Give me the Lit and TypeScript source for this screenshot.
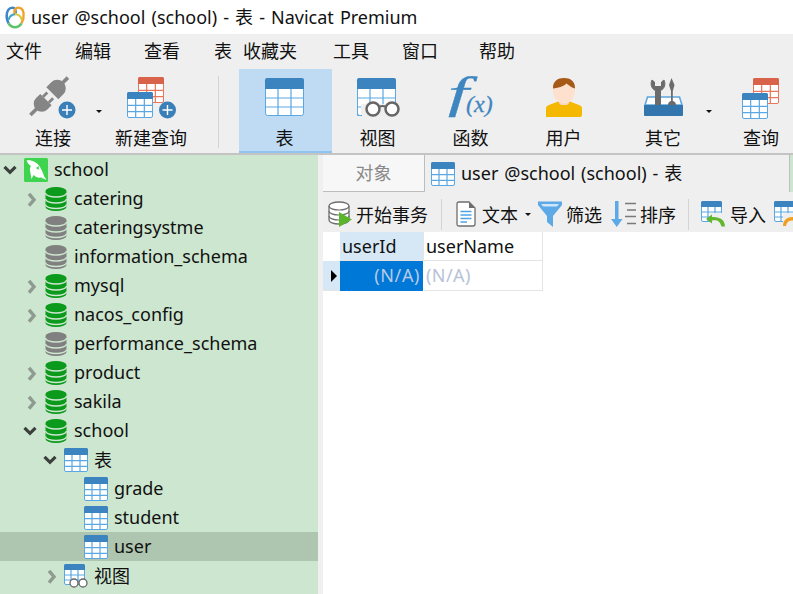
import { LitElement, html, css, svg } from "lit";
import { customElement } from "lit/decorators.js";

const BLUE = "#3b84c0";
const LINE = "#5aa7e2";
const RED = "#d9634a";
const REDLINE = "#e8775c";

function tableBody(x: number, y: number, w: number, h: number, head: string, line: string, headH: number) {
  const r = Math.max(1.5, w / 18);
  const c1 = x + w / 3, c2 = x + (2 * w) / 3;
  const bodyH = h - headH;
  const r1 = y + headH + bodyH / 3, r2 = y + headH + (2 * bodyH) / 3;
  return svg`
    <rect x=${x + 0.5} y=${y + 0.5} width=${w - 1} height=${h - 1} rx=${r} fill="#fff" stroke=${line}/>
    <path d="M${c1} ${y} V${y + h} M${c2} ${y} V${y + h} M${x} ${r1} H${x + w} M${x} ${r2} H${x + w}" stroke=${line} stroke-width="1.2" fill="none"/>
    <path d="M${x} ${y + headH} V${y + r} Q${x} ${y} ${x + r} ${y} H${x + w - r} Q${x + w} ${y} ${x + w} ${y + r} V${y + headH} Z" fill=${head}/>
  `;
}

const smallTable = html`<svg class="i24" viewBox="0 0 24 24">${tableBody(0, 0, 24, 24, BLUE, LINE, 7)}</svg>`;
const smallView = html`<svg class="i24" viewBox="0 0 24 24">
  ${tableBody(0, 0, 21, 21, BLUE, LINE, 6)}
  <circle cx="10" cy="19" r="4" fill="#fff" stroke="#666" stroke-width="1.3"/>
  <circle cx="19" cy="19" r="4" fill="#fff" stroke="#666" stroke-width="1.3"/>
</svg>`;

function chevron(open: boolean) {
  if (open) {
    return html`<svg class="chev" viewBox="0 0 20 20"><path d="M0.5 6.8 L6 12.3 L11.5 6.8" fill="none" stroke="#3c3f3c" stroke-width="3.2"/></svg>`;
  }
  return html`<svg class="chev" viewBox="0 0 20 20"><path d="M5 4.8 L10 10.75 L5 16.7" fill="none" stroke="#8f9a90" stroke-width="3.4"/></svg>`;
}

function db(color: string) {
  return html`<svg class="i24" viewBox="-1.5 0 24 24">
    <path d="M0 4 A10.5 4 0 0 1 21 4 V20 A10.5 4 0 0 1 0 20 Z" fill=${color}/>
    <path d="M0 6 A10.5 4 0 0 0 21 6 M0 12 A10.5 4 0 0 0 21 12 M0 17.5 A10.5 4 0 0 0 21 17.5" fill="none" stroke="#cde6cf" stroke-width="1.4"/>
  </svg>`;
}

const dolphin = html`<svg class="i24" viewBox="0 0 24 24">
  <rect width="24" height="24" rx="1.5" fill="#3fd44f"/>
  <path d="M2.5 2.5 C7 1.5 13 4 16 9 C18 12.5 19 15 20 18 L22.5 22 L17 19.5 C14 20 11.5 19 9.5 17 L7.5 21 L6.3 14 C5.5 11.5 6 9.5 7 8 C5 7 3.5 5 2.5 2.5 Z" fill="#fff"/>
  <path d="M12 10 L15 8 L14.5 12 Z" fill="#3fd44f"/>
</svg>`;

const plus = (cx: number, cy: number) => svg`
  <circle cx=${cx} cy=${cy} r="8.5" fill="#3b7fb8"/>
  <path d="M${cx - 5} ${cy} H${cx + 5} M${cx} ${cy - 5} V${cy + 5}" stroke="#fff" stroke-width="1.4"/>
`;

const icons = {
  connect: html`<svg class="big" viewBox="0 0 50 44">
    <g transform="translate(21.5,20) rotate(-45)" fill="#858585">
      <rect x="-27" y="-1.8" width="9" height="3.6"/>
      <path d="M-5 -8 H-11 A8 8 0 0 0 -11 8 H-5 Z"/>
      <rect x="-5" y="-5.5" width="6" height="2.8"/>
      <rect x="-5" y="2.7" width="6" height="2.8"/>
      <path d="M4 -8.5 H11 A8.5 8.5 0 0 1 11 8.5 H4 Z"/>
      <rect x="18" y="-1.8" width="8" height="3.6"/>
    </g>
    ${plus(39, 34)}
  </svg>`,
  newQuery: html`<svg class="big" viewBox="0 0 50 44">
    ${tableBody(13, 1, 26, 26, RED, REDLINE, 7)}
    ${tableBody(2, 16, 26, 26, BLUE, LINE, 7)}
    ${plus(42.5, 34)}
  </svg>`,
  table: html`<svg class="big" viewBox="0 0 50 44">
    ${tableBody(5, 2, 39, 38, BLUE, LINE, 11)}
  </svg>`,
  view: html`<svg class="big" viewBox="0 0 50 44">
    ${tableBody(4, 2, 39, 38, BLUE, LINE, 11)}
    <rect x="8" y="28" width="37" height="14" fill="#efefef"/>
    <path d="M4.5 32 V39.5 H9" fill="none" stroke=${LINE}/>
    <circle cx="20" cy="33" r="6.5" fill="#fff" stroke="#666" stroke-width="2.5"/>
    <circle cx="39" cy="33" r="6.5" fill="#fff" stroke="#666" stroke-width="2.5"/>
    <path d="M26 31 Q29.5 29 33 31" fill="none" stroke="#666" stroke-width="2"/>
  </svg>`,
  func: html`<svg class="big fx" viewBox="0 0 50 44">
    <text class="fx1" transform="translate(2,32) scale(1.7,1)">f</text>
    <text class="fx2" x="20" y="36">(x)</text>
  </svg>`,
  user: html`<svg class="big" viewBox="0 0 50 44">
    <path d="M7 41 V32 Q7 30 10 29 L19 25.5 H31 L40 29 Q43 30 43 32 V39 Q43 41 41 41 Z" fill="#f5b800"/>
    <rect x="20" y="22" width="10" height="7" rx="3" fill="#f7d8c4"/>
    <ellipse cx="25" cy="14.5" rx="11" ry="13" fill="#fde0cd"/>
    <path d="M14 12.5 C13.5 5 19 2 25 2 C31 2 36.5 5 36 12.5 C33 12 30 9.5 27.5 7.5 C25 10.5 18 12 14 12.5 Z" fill="#a55a18"/>
  </svg>`,
  other: html`<svg class="big" viewBox="0 0 50 44">
    <path d="M9.5 21 H41.5 L44 29 H7 Z" fill="#fff" stroke=${LINE} stroke-width="1.6"/>
    <path d="M14 4 C12 8 13.5 13 17.5 14.5 V30 H22.5 V14.5 C26.5 13 28 8 26 4 L23.5 6 V10.5 H16.5 V6 Z" fill="#6b6b6b" stroke="#6b6b6b" stroke-width="1"/>
    <path d="M33.5 2 L36.5 9 L34.8 15 V25 C37 25.5 38 27 38 29 H30 C30 27 31 25.5 33 25 V15 L31 9 Z" fill="#6b6b6b"/>
    <path d="M6 29 H45 V39 Q45 40 44 40 H7 Q6 40 6 39 Z" fill="#3376ae"/>
  </svg>`,
  query: html`<svg class="big" viewBox="0 0 50 44">
    ${tableBody(17, 2, 26, 26, RED, REDLINE, 7)}
    ${tableBody(6, 17, 26, 26, BLUE, LINE, 7)}
  </svg>`,
};

const tbIcons = {
  tx: html`<svg class="t24" viewBox="0 0 24 26">
    <path d="M1 5 A10 4 0 0 1 21 5 V19 A10 4 0 0 1 1 19 Z" fill="#fff" stroke="#6e6e6e" stroke-width="1.3"/>
    <path d="M1 5 A10 4 0 0 0 21 5 M1 10 A10 4 0 0 0 21 10 M1 15 A10 4 0 0 0 21 15" fill="none" stroke="#6e6e6e" stroke-width="1.2"/>
    <path d="M11 11 L24 18.5 L11 26 Z" fill="#5ab52a"/>
  </svg>`,
  doc: html`<svg class="t20" viewBox="0 0 20 26">
    <path d="M1 3 Q1 1 3 1 H13 L19 7 V23 Q19 25 17 25 H3 Q1 25 1 23 Z" fill="#fff" stroke="#6e6e6e" stroke-width="1.3"/>
    <path d="M13 1 V7 H19 Z" fill="#6e6e6e"/>
    <path d="M4.5 10.5 H15.5 M4.5 14 H15.5 M4.5 17.5 H15.5 M4.5 21 H11" stroke="#4ea3e6" stroke-width="1.3"/>
  </svg>`,
  funnel: html`<svg class="t24" viewBox="0 0 24 26">
    <path d="M0 0.5 H24 V4 L15 15 V26 L9 21 V15 L0 4 Z" fill="#5da8e6"/>
    <path d="M3 3 H21 L19 5.5 H5 Z" fill="#cfe5f8"/>
  </svg>`,
  sort: html`<svg class="t25" viewBox="0 0 25 26">
    <path d="M4 0 H7.5 V18 H11.5 L5.75 26 L0 18 H4 Z" fill="#5da8e6"/>
    <path d="M14 2.5 H25 M16 9 H25 M14 15.5 H25 M16 22.5 H25" stroke="#7a7a7a" stroke-width="1.4"/>
  </svg>`,
  imp: html`<svg class="t25" viewBox="0 0 25 26">
    ${tableBody(0, 0, 21, 21, BLUE, LINE, 6)}
    <rect x="9" y="12" width="16" height="14" fill="#efefef"/>
    <path d="M11 13.5 L5 18 L11 22.5 V19.5 C16 18.5 19 20 20.5 25.5 H24 C24 19 19 15.5 11 16 Z" fill="#62b72e"/>
  </svg>`,
  imp2: html`<svg class="t25" viewBox="0 0 25 26">
    ${tableBody(0, 0, 21, 21, BLUE, LINE, 6)}
    <rect x="9" y="12" width="16" height="14" fill="#efefef"/>
    <path d="M20 13 L25 18 L20 22.5 V19.5 C16 19.5 13 20 12 25 H9 C9 19 13 15.5 20 16 Z" fill="#f0a020"/>
  </svg>`,
};

const logo = html`<svg class="logo" viewBox="0 0 24 24">
  <path d="M5 19 C1 12 3 3 8 2 C12 1 14 5 12 9" fill="none" stroke="#3f86c8" stroke-width="2.6"/>
  <path d="M12 9 C10 5 13 1 17 2 C22 3 23 12 19 19" fill="none" stroke="#f0a32a" stroke-width="2.6"/>
  <path d="M5 19 A8 8 0 0 0 19 19" fill="none" stroke="#5ec26a" stroke-width="2.8"/>
  <path d="M5 15 A8 8 0 0 1 12 9" fill="none" stroke="#43a8c8" stroke-width="2.4"/>
  <path d="M12 9 A8 8 0 0 1 19.5 15" fill="none" stroke="#d9c83a" stroke-width="2.4"/>
</svg>`;

const MENU: [string, number][] = [
  ["文件", 6], ["编辑", 33], ["查看", 33], ["表", 34], ["收藏夹", 11], ["工具", 36], ["窗口", 33], ["帮助", 41],
];

type Row = { label: string; level: number; chev?: "open" | "closed"; icon: unknown; sel?: boolean };
const GREEN = "#0b9a1b";
const GREY = "#808080";
const TREE: Row[] = [
  { label: "school", level: 0, chev: "open", icon: dolphin },
  { label: "catering", level: 1, chev: "closed", icon: db(GREEN) },
  { label: "cateringsystme", level: 1, icon: db(GREY) },
  { label: "information_schema", level: 1, icon: db(GREY) },
  { label: "mysql", level: 1, chev: "closed", icon: db(GREEN) },
  { label: "nacos_config", level: 1, chev: "closed", icon: db(GREEN) },
  { label: "performance_schema", level: 1, icon: db(GREY) },
  { label: "product", level: 1, chev: "closed", icon: db(GREEN) },
  { label: "sakila", level: 1, chev: "closed", icon: db(GREEN) },
  { label: "school", level: 1, chev: "open", icon: db(GREEN) },
  { label: "表", level: 2, chev: "open", icon: smallTable },
  { label: "grade", level: 3, icon: smallTable },
  { label: "student", level: 3, icon: smallTable },
  { label: "user", level: 3, icon: smallTable, sel: true },
  { label: "视图", level: 2, chev: "closed", icon: smallView },
];

@customElement("app-root")
export class AppRoot extends LitElement {
  static styles = css`
    :host {
      display: block;
      width: 793px;
      height: 594px;
      overflow: hidden;
      background: #fff;
      color: #111;
      font-family: "Noto Sans", "Noto Sans CJK SC", sans-serif;
      font-size: 18px;
    }
    svg { display: block; flex: none; overflow: visible; }
    .title { height: 34px; display: flex; align-items: center; gap: 5px; padding-left: 4px; background: #fff; white-space: nowrap; }
    .title span { margin-top: -2px; word-spacing: 1.4px; }
    .logo { width: 22px; height: 24px; }
    .menu { height: 35px; box-sizing: border-box; padding-bottom: 4px; display: flex; align-items: center; background: #efefef; }
    .menu span { flex: none; }
    .toolbar { height: 84px; display: flex; background: #efefef; padding-left: 10px; border-bottom: 2px solid #c4c4c4; overflow: hidden; box-sizing: content-box; }
    .big-btn { flex: none; display: flex; flex-direction: column; align-items: center; padding-top: 7px; box-sizing: border-box; height: 84px; }
    .big { width: 50px; height: 44px; }
    .big-btn span { line-height: 24px; margin-top: 6px; }
    .w86 { width: 86px; }
    .w96 { width: 96px; }
    .w96 span { margin-left: 2px; }
    .w98 { width: 98px; }
    .w93 { width: 93px; padding-right: 2px; }
    .w90 { width: 90px; margin-left: 7px; }
    .active { background: #bfdbf3; border-bottom: 2px solid #8fc4f0; }
    .drop { flex: none; width: 6px; height: 84px; display: flex; align-items: center; justify-content: center; }
    .back { margin-left: -2px; }
    .tri { width: 0; height: 0; border-left: 3px solid transparent; border-right: 3px solid transparent; border-top: 3px solid #111; flex: none; }
    .sep { flex: none; width: 1px; height: 72px; margin: 1px 20px 0; align-self: center; background: #d4d4d4; }
    .main { height: 439px; display: flex; }
    .tree { flex: none; width: 318px; background: #cde6cf; overflow: hidden; }
    .row { display: flex; align-items: center; height: 29px; white-space: nowrap; }
    .row.sel { background: #aec5af; }
    .chev { width: 20px; height: 20px; flex: none; }
    .nochev { width: 20px; flex: none; }
    .i24 { width: 24px; height: 24px; }
    .row .name { margin-left: 6px; margin-top: -2px; }
    .gutter { flex: none; width: 5px; background: #f0f0f0; }
    .right { flex: 1; min-width: 0; display: flex; flex-direction: column; background: #fff; }
    .tabs { height: 37px; display: flex; background: #efefef; }
    .tab-off { flex: none; width: 102px; box-sizing: border-box; padding-bottom: 2px; display: flex; align-items: center; justify-content: center; color: #8a8a8a; background: #f7f7f7; border-right: 1px solid #bdbdbd; border-bottom: 1px solid #bdbdbd; }
    .tab-on { flex: none; width: 365px; box-sizing: border-box; display: flex; align-items: center; gap: 6px; padding-left: 6px; border-right: 1px solid #bdbdbd; white-space: nowrap; }
    .tab-on span { margin-top: -4px; word-spacing: 1.2px; }
    .tab-end { flex: 1; background: #cde6cf; }
    .tools { height: 40px; box-sizing: border-box; padding-top: 4px; display: flex; align-items: center; background: #efefef; padding-left: 5px; overflow: hidden; white-space: nowrap; }
    .tool { flex: none; display: flex; align-items: center; gap: 4px; }
    .t24 { width: 24px; height: 26px; }
    .t20 { width: 20px; height: 26px; }
    .t25 { width: 25px; height: 26px; }
    .tsep { flex: none; width: 1px; height: 31px; background: #d4d4d4; }
    .m13 { margin-left: 13px; }
    .m14 { margin-left: 14px; }
    .m7 { margin-left: 7px; }
    .m9 { margin-left: 9px; }
    .m12 { margin-left: 12px; }
    .m8 { margin-left: 8px; }
    .gap6 { gap: 6px; }
    .grid { display: grid; grid-template-columns: 17px 84px 119px; grid-template-rows: 29px 30px; width: 220px; }
    .cell { box-sizing: border-box; display: flex; align-items: center; padding: 0 2px; border-right: 1px solid #e4e4e4; border-bottom: 1px solid #e4e4e4; white-space: nowrap; }
    .corner { border: none; }
    .hl { background: #d6e8f6; }
    .ind { background: #d6e8f6; justify-content: flex-end; padding: 0 3px 0 0; border: none; border-bottom: 1px solid #e4e4e4; }
    .arrow { width: 0; height: 0; border-top: 6px solid transparent; border-bottom: 6px solid transparent; border-left: 6px solid #000; }
    .cur { background: #0078d7; color: #b9c9e6; justify-content: flex-end; padding: 0 3px 2px 0; letter-spacing: 0.6px; border: none; border-right: 1px solid #fff; }
    .na { color: #b8c2d8; padding: 0 2px 2px; letter-spacing: 0.4px; }
    .fx1 { font: italic 44px "Liberation Serif", serif; fill: #3f86c0; stroke: #3f86c0; stroke-width: 0.3px; }
    .fx2 { font: italic 24px "Liberation Serif", serif; fill: #3f86c0; stroke: #3f86c0; stroke-width: 0.3px; }
  `;

  private btn(icon: unknown, label: string, cls: string) {
    return html`<div class="big-btn ${cls}">${icon}<span>${label}</span></div>`;
  }

  render() {
    return html`
      <div class="title">${logo}<span>user @school (school) - 表 - Navicat Premium</span></div>
      <div class="menu">
        ${MENU.map(([t, m]) => html`<span style="margin-left:${m}px">${t}</span>`)}
      </div>
      <div class="toolbar">
        ${this.btn(icons.connect, "连接", "w86")}
        <div class="drop"><i class="tri"></i></div>
        ${this.btn(icons.newQuery, "新建查询", "w96")}
        <div class="sep"></div>
        ${this.btn(icons.table, "表", "w93 active")}
        ${this.btn(icons.view, "视图", "w93")}
        ${this.btn(icons.func, "函数", "w93")}
        ${this.btn(icons.user, "用户", "w93")}
        ${this.btn(icons.other, "其它", "w90")}
        <div class="drop back"><i class="tri"></i></div>
        ${this.btn(icons.query, "查询", "w98")}
      </div>
      <div class="main">
        <div class="tree">
          ${TREE.map(
            (r) => html`<div class="row ${r.sel ? "sel" : ""}" style="padding-left:${4 + r.level * 20}px">
              ${r.chev ? chevron(r.chev === "open") : html`<span class="nochev"></span>`}
              ${r.icon}
              <span class="name">${r.label}</span>
            </div>`
          )}
        </div>
        <div class="gutter"></div>
        <div class="right">
          <div class="tabs">
            <div class="tab-off">对象</div>
            <div class="tab-on">${smallTable}<span>user @school (school) - 表</span></div>
            <div class="tab-end"></div>
          </div>
          <div class="tools">
            <div class="tool">${tbIcons.tx}<span>开始事务</span></div>
            <div class="tsep m13"></div>
            <div class="tool m14 gap6">${tbIcons.doc}<span>文本</span></div>
            <i class="tri m7"></i>
            <div class="tool m7">${tbIcons.funnel}<span>筛选</span></div>
            <div class="tool m9">${tbIcons.sort}<span>排序</span></div>
            <div class="tsep m12"></div>
            <div class="tool m12">${tbIcons.imp}<span>导入</span></div>
            <div class="tool m8">${tbIcons.imp2}</div>
          </div>
          <div class="grid">
            <div class="cell corner"></div>
            <div class="cell hl">userId</div>
            <div class="cell">userName</div>
            <div class="cell ind"><i class="arrow"></i></div>
            <div class="cell cur">(N/A)</div>
            <div class="cell na">(N/A)</div>
          </div>
        </div>
      </div>
    `;
  }
}
